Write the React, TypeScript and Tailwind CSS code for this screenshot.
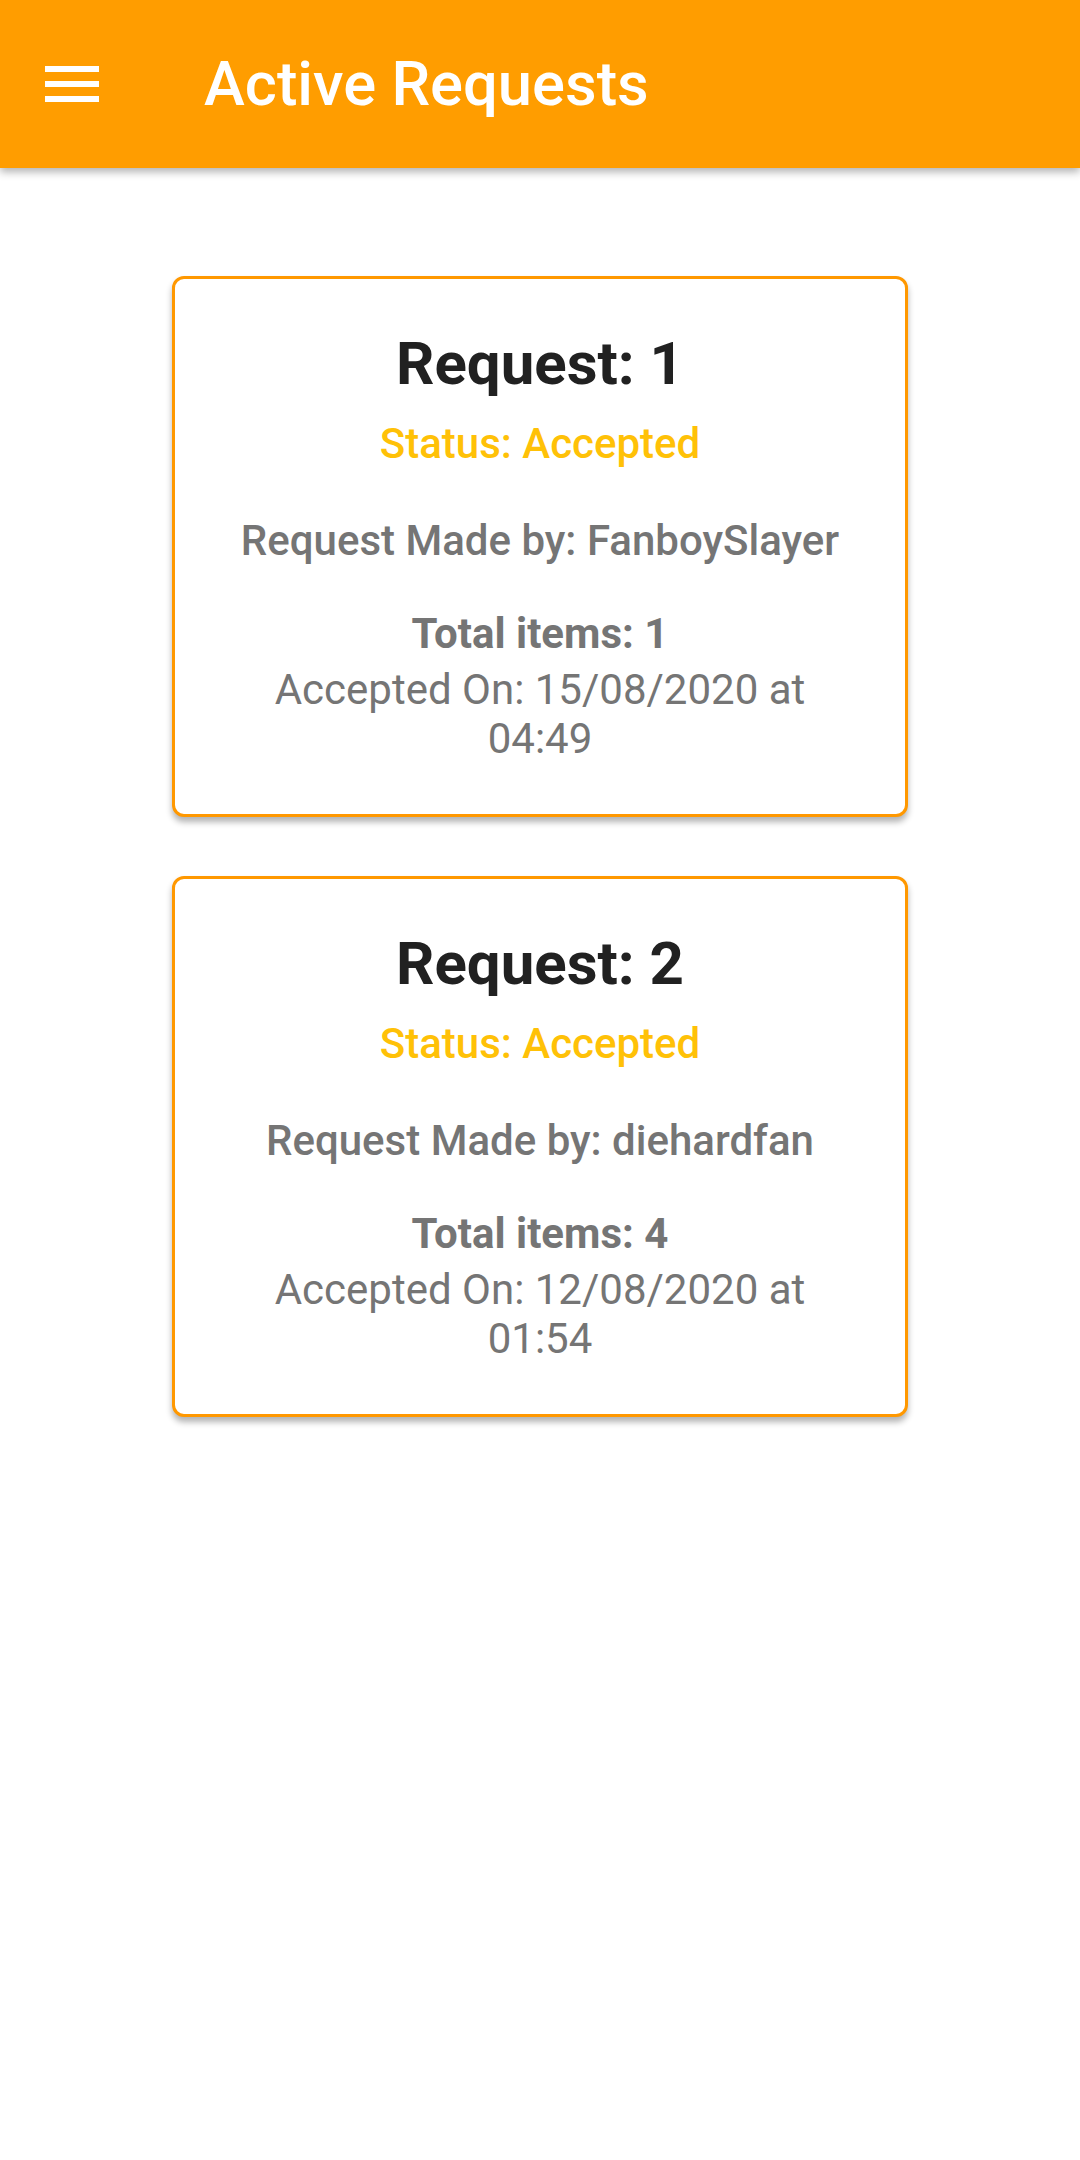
const requests = [
  { id: 1, user: "FanboySlayer", items: 1, date: "15/08/2020", time: "04:49" },
  { id: 2, user: "diehardfan", items: 4, date: "12/08/2020", time: "01:54" },
];

const MenuIcon = () => (
  <svg width="54" height="36" viewBox="0 0 54 36" className="block">
    <rect x="0" y="0" width="54" height="6" fill="white" />
    <rect x="0" y="15" width="54" height="6" fill="white" />
    <rect x="0" y="30" width="54" height="6" fill="white" />
  </svg>
);

const RequestCard = ({ r }: { r: (typeof requests)[number] }) => (
  <div className="w-[736px] rounded-[12px] border-[3px] border-[#ff9800] bg-white pt-[50px] pb-[51px] px-[40px] shadow-[0_5px_6px_rgba(0,0,0,0.3)] flex flex-col items-center text-center">
    <div className="text-[60px] font-bold text-[#212121] leading-[70px]">
      Request: {r.id}
    </div>
    <div className="mt-[20px] text-[42px] font-medium text-[#ffc107] leading-[49px]">
      Status: Accepted
    </div>
    <div className="mt-[48px] text-[42px] font-medium text-[#757575] leading-[49px]">
      Request Made by: {r.user}
    </div>
    <div className="mt-[44px] text-[42px] font-bold text-[#757575] leading-[49px]">
      Total items: {r.items}
    </div>
    <div className="mt-[7px] text-[42px] text-[#757575] leading-[49px]">
      Accepted On: {r.date} at
      <br />
      {r.time}
    </div>
  </div>
);

export default function App() {
  return (
    <div className="w-[1080px] h-[2160px] bg-white font-['Roboto',sans-serif]">
      <div className="relative z-10 h-[168px] bg-[#ff9d00] flex items-center shadow-[0_4px_8px_rgba(0,0,0,0.3)]">
        <div className="pl-[45px]">
          <MenuIcon />
        </div>
        <div className="pl-[105px] text-[61.5px] font-medium text-white leading-[168px]">
          Active Requests
        </div>
      </div>
      <div className="pt-[108px] flex flex-col items-center gap-[59px]">
        {requests.map((r) => (
          <RequestCard key={r.id} r={r} />
        ))}
      </div>
    </div>
  );
}
